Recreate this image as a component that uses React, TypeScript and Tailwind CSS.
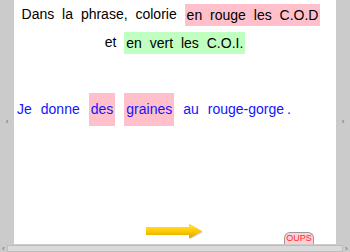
import React from "react";

// Exercise screen: colour the C.O.D / C.O.I. in a sentence.
function SideBar({ arrow }: { arrow: string }) {
  return (
    <div className="flex w-[14px] items-center justify-center bg-[#cbcbcb]">
      <span className="text-[8px] leading-none text-[#666]">{arrow}</span>
    </div>
  );
}

function NextArrow() {
  return (
    <svg width="58" height="17" viewBox="0 0 58 17">
      <defs>
        <linearGradient id="shaft" x1="0" y1="0" x2="0" y2="1">
          <stop offset="0" stopColor="#ffe34d" />
          <stop offset="0.5" stopColor="#ffcc00" />
          <stop offset="1" stopColor="#d9a400" />
        </linearGradient>
      </defs>
      <path d="M2 6 H44 V2 L57 9 L44 16 V12 H2 Z" fill="#b0a89a" opacity="0.6" />
      <path d="M0 4 H43 V0.5 L56 8 L43 15.5 V12 H0 Z" fill="url(#shaft)" />
    </svg>
  );
}

export default function App() {
  const words = [
    { w: "Je" },
    { w: "donne" },
    { w: "des", hl: true },
    { w: "graines", hl: true },
    { w: "au" },
    { w: "rouge-gorge\u2009." },
  ];

  return (
    <div
      className="flex h-[252px] w-[350px] flex-col overflow-hidden bg-white"
      style={{ fontFamily: '"Liberation Sans", Arial, sans-serif' }}
    >
      <div className="flex h-[244px]">
        <SideBar arrow="‹" />
        <div className="flex flex-1 flex-col bg-white">
          <div className="text-center text-[14px] leading-[28px] text-black [word-spacing:4px]">
            <p className="pr-[8px]">
              Dans la phrase, colorie{" "}
              <span className="inline-block h-[22px] bg-[#ffc0cb] px-[2px] align-middle leading-[22px]">
                en rouge les C.O.D
              </span>
            </p>
            <p>
              et{" "}
              <span className="inline-block h-[22px] bg-[#c0ffc0] px-[2px] align-middle leading-[22px]">
                en vert les C.O.I.
              </span>
            </p>
          </div>

          <div className="mt-[37px] flex items-center gap-[9px] pl-[3px] text-[14px] text-[#1414ff]">
            {words.map((x) => (
              <span
                key={x.w}
                className={
                  x.hl
                    ? "flex h-[33px] items-center bg-[#ffc0cb] px-[2px]"
                    : "flex h-[33px] items-center"
                }
              >
                {x.w}
              </span>
            ))}
          </div>

          <div className="flex-1" />

          <div className="grid grid-cols-[1fr_auto_1fr] items-end">
            <div />
            <div className="mb-[4px]">
              <NextArrow />
            </div>
            <div className="flex justify-end pr-[22px]">
              <div className="flex h-[12px] w-[30px] items-start justify-center rounded-t-[6px] border border-b-0 border-[#9a9a9a] bg-[#ffd0d8] pt-[1px] text-[9px] leading-none text-[#ff2a2a]">
                OUPS
              </div>
            </div>
          </div>
        </div>
        <SideBar arrow="›" />
      </div>

      <div className="flex h-[8px] items-center bg-[#cbcbcb]">
        <span className="w-[7px] text-center text-[7px] leading-none text-[#555]">‹</span>
        <div className="h-[7px] flex-1 border border-[#bdbdbd] bg-[#dadada]" />
        <span className="w-[7px] text-center text-[7px] leading-none text-[#555]">›</span>
      </div>
    </div>
  );
}
